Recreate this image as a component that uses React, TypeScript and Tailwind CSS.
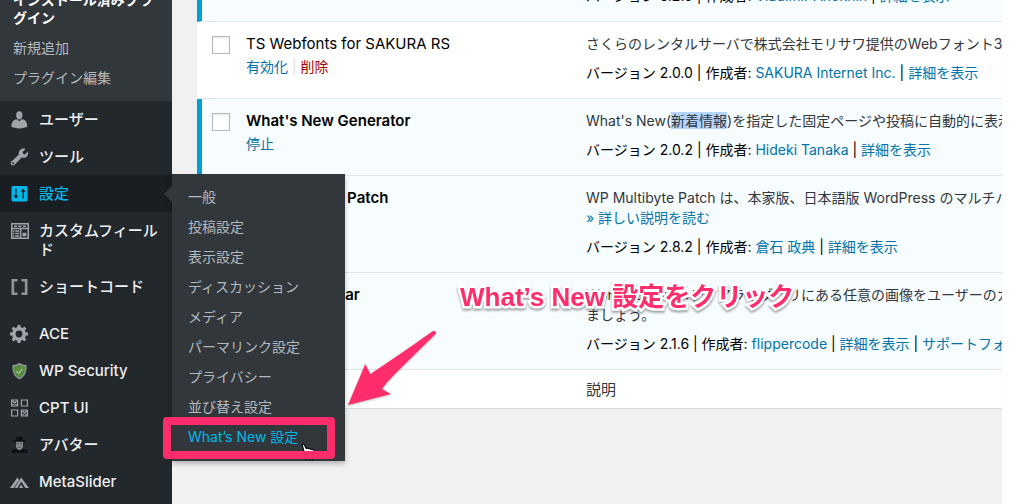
import type { ReactNode } from "react";

type MenuItem = { text: string; icon: ReactNode; current?: boolean };

function Icon({ children }: { children: ReactNode }) {
  return (
    <svg viewBox="0 0 20 20" className="w-5 h-5 shrink-0" fill="#a0a5aa" aria-hidden="true">
      {children}
    </svg>
  );
}

const icons = {
  user: (
    <Icon>
      <ellipse cx="10.3" cy="5.3" rx="3.1" ry="4.1" />
      <path d="M6.2 9.4 8.4 9.2 10.3 11.6 12.3 9.2 14.6 9.4C17 10.2 18.3 12.6 18.3 16.6 15.8 19 4.8 19 2.3 16.6 2.3 12.6 3.8 10.2 6.2 9.4Z" />
    </Icon>
  ),
  tool: (
    <Icon>
      <path
        fillRule="evenodd"
        d="M16.5 2.1 13.6 5.1 14.2 7 16 7.5 18.9 4.6C19.6 6.7 18.9 8.6 17.6 9.7 16.2 10.9 14.3 11.1 12.7 10.6L5.6 17.7C3.4 19.8.2 16.8 2.4 14.5L9.9 7.6C9.4 5.8 9.8 4.1 11.1 2.9 12.5 1.6 14.6 1.2 16.5 2.1ZM4.1 15.2A1 1 0 1 0 4.1 17.2 1 1 0 1 0 4.1 15.2Z"
      />
    </Icon>
  ),
  settings: (
    <Icon>
      <rect x="2.5" y="2" width="16" height="15.5" rx="1.5" fill="#00b9eb" />
      <path d="M4.4 11.4H9.4L6.9 14.8ZM11.6 7.8H16.6L14.1 4.4Z" fill="#191e23" />
      <path d="M6.9 4.6V12M14.1 7V14.8" stroke="#191e23" strokeWidth="1.3" />
    </Icon>
  ),
  fields: (
    <Icon>
      <path
        fillRule="evenodd"
        d="M2 2H20V18H2ZM3.5 3.5V6.8H18.5V3.5ZM3.5 8.3V16.5H11V8.3ZM12.4 8.3V16.5H18.5V8.3Z"
      />
      <path d="M5 4.4H8V5.9H5ZM9.3 4.4H12.6V5.9H9.3ZM14 4.4H17V5.9H14ZM4 9.3H5.4V10.7H4ZM6.2 9.3H10.3V10.7H6.2ZM4 11.8H5.4V13.2H4ZM6.2 11.8H10.3V13.2H6.2ZM4 14.3H5.4V15.7H4ZM6.2 14.3H10.3V15.7H6.2ZM13.5 11.8H17.4V15.3H13.5Z" />
    </Icon>
  ),
  code: (
    <Icon>
      <path d="M2.5 2H8.5V4.4H5.2V15.6H8.5V18H2.5ZM18.5 2H12.5V4.4H15.8V15.6H12.5V18H18.5Z" fill="#8f9499" />
    </Icon>
  ),
  gear: (
    <Icon>
      <circle cx="10" cy="10" r="5.2" fill="none" stroke="#a0a5aa" strokeWidth="3.6" />
      <path
        d="M10 1V4M10 16V19M1 10H4M16 10H19M3.6 3.6 5.8 5.8M14.2 14.2 16.4 16.4M16.4 3.6 14.2 5.8M5.8 14.2 3.6 16.4"
        stroke="#a0a5aa"
        strokeWidth="3"
      />
    </Icon>
  ),
  shield: (
    <Icon>
      <path d="M10.5 1.8C12.8 3.6 15 4 17.6 4 17.8 10 16.8 15.6 10.5 18.4 4.2 15.6 3.2 10 3.4 4 6 4 8.2 3.6 10.5 1.8Z" fill="#8c9297" />
      <path d="M10.5 3.5C12.4 4.9 14.2 5.4 16.2 5.4 16.2 10.5 15.2 14.6 10.5 16.9 5.8 14.6 4.8 10.5 4.8 5.4 6.8 5.4 8.6 4.9 10.5 3.5Z" fill="#598c3f" />
      <path d="M7.4 10.2 9.8 12.2 13.4 7.8" fill="none" stroke="#a9bf9c" strokeWidth="1.3" />
    </Icon>
  ),
  grid: (
    <Icon>
      <path
        d="M2.6 2H8.6V8H2.6ZM12.4 2H18.4V8H12.4ZM2.6 12H8.6V18H2.6ZM12.4 12H18.4V18H12.4ZM3.6 3 7.6 7M7.6 3 3.6 7M13.4 13 17.4 17M17.4 13 13.4 17"
        fill="none"
        stroke="#a0a5aa"
        strokeWidth="1.2"
      />
    </Icon>
  ),
  avatar: (
    <Icon>
      <path d="M7.4 2.4Q10.5.8 13.6 2.4V6H7.4ZM4 5.2H17V6.8H4ZM2.5 18Q2.5 14.2 6.5 14H14.5Q18.5 14.2 18.5 18Z" fill="#0d0f11" />
      <path d="M7 6.8H14V11.5Q13.4 14.8 10.5 15.2 7.6 14.8 7 11.5Z" fill="#858585" />
      <path d="M7.6 8.2H9.8V9.2H7.6ZM11.2 8.2H13.4V9.2H11.2ZM9 12H12V12.8H9Z" fill="#555" />
    </Icon>
  ),
  slider: (
    <Icon>
      <path d="M1 16 8.4 5.4 10.2 8 4.6 16ZM5.6 16 12.2 5.4 20 16H16.4L12.2 9.8 8.4 16ZM10 16 12 12.6 14.4 16Z" />
    </Icon>
  ),
};

const mainMenu: MenuItem[] = [
  { text: "ユーザー", icon: icons.user },
  { text: "ツール", icon: icons.tool },
  { text: "設定", icon: icons.settings, current: true },
  { text: "カスタムフィールド", icon: icons.fields },
  { text: "ショートコード", icon: icons.code },
];

const pluginMenu: MenuItem[] = [
  { text: "ACE", icon: icons.gear },
  { text: "WP Security", icon: icons.shield },
  { text: "CPT UI", icon: icons.grid },
  { text: "アバター", icon: icons.avatar },
  { text: "MetaSlider", icon: icons.slider },
];

const settingsMenu = [
  "一般",
  "投稿設定",
  "表示設定",
  "ディスカッション",
  "メディア",
  "パーマリンク設定",
  "プライバシー",
  "並び替え設定",
];

function HandCursor() {
  return (
    <svg viewBox="0 0 16 18" className="absolute left-[128px] top-[21px] w-4 h-[18px]" aria-hidden="true">
      <path
        d="M2.2 1.6Q3.6.4 4.6 2.2L6.2 5.6Q7.4 4.4 8.4 5.8 9.8 5 10.8 6.4 12 5.6 13 6.8 14.6 6.8 14.6 8.6V12L13 16.8H6.4L2 12Q1.4 10 3.4 10.4L4.6 11Z"
        fill="#fff"
        stroke="#000"
        strokeWidth="1.1"
        strokeLinejoin="round"
      />
    </svg>
  );
}

function SettingsFlyout() {
  return (
    <div className="absolute left-full -top-px z-20 w-[173px] pt-2 pb-[9px] bg-[#32373c] text-sm leading-[30px] shadow-[0_3px_5px_rgba(0,0,0,0.25)]">
      {/* Pointer toward the open item */}
      <span className="absolute right-full top-3 border-y-8 border-r-8 border-y-transparent border-r-[#32373c]" />
      <ul>
        {settingsMenu.map((text) => (
          <li key={text}>
            <a href="#" className="block px-4 text-[#b4b9be]">{text}</a>
          </li>
        ))}
        <li className="relative">
          <a href="#" className="block px-4 text-[#00b9eb]">What’s New 設定</a>
          <HandCursor />
          <span className="absolute -left-[9px] right-[10px] -top-[5px] -bottom-[7px] border-8 border-[#ff2d6b] rounded" />
        </li>
      </ul>
    </div>
  );
}

function Menu({ items }: { items: MenuItem[] }) {
  return (
    <ul>
      {items.map((item) => (
        <li key={item.text} className={item.current ? "relative bg-[#191e23]" : ""}>
          <a
            href="#"
            className={`flex gap-2.5 pl-[9px] pr-3 py-[9px] text-[15px] leading-[19px] font-medium ${item.current ? "text-[#00b9eb]" : "text-[#eee]"}`}
          >
            <span className="h-[19px]">{item.icon}</span>
            <span>{item.text}</span>
          </a>
          {item.current && <SettingsFlyout />}
        </li>
      ))}
    </ul>
  );
}

function Link({ children }: { children: ReactNode }) {
  return <a href="#" className="text-[#0073aa]">{children}</a>;
}

type Plugin = {
  name: string;
  active?: boolean;
  description: ReactNode;
  version: string;
  author: string;
  support?: boolean;
};

const plugins: Plugin[] = [
  {
    name: "Shortcodes Ultimate",
    active: true,
    description: "ショートコード集",
    version: "5.2.0",
    author: "Vladimir Anokhin",
  },
  {
    name: "TS Webfonts for SAKURA RS",
    description: "さくらのレンタルサーバで株式会社モリサワ提供のWebフォント30書体",
    version: "2.0.0",
    author: "SAKURA Internet Inc.",
  },
  {
    name: "What's New Generator",
    active: true,
    description: (
      <>
        What's New(<mark className="bg-[#b2d4fd] text-inherit">新着情報</mark>)を指定した固定ページや投稿に自動的に表示
      </>
    ),
    version: "2.0.2",
    author: "Hideki Tanaka",
  },
  {
    name: "WP Multibyte Patch",
    active: true,
    description: (
      <>
        WP Multibyte Patch は、本家版、日本語版 WordPress のマルチバイト
        <br />
        <Link>» 詳しい説明を読む</Link>
      </>
    ),
    version: "2.8.2",
    author: "倉石 政典",
  },
  {
    name: "WP User Avatar",
    active: true,
    description: (
      <>
        WordPress のメディアライブラリにある任意の画像をユーザーのカスタム
        <br />
        ましょう。
      </>
    ),
    version: "2.1.6",
    author: "flippercode",
    support: true,
  },
];

function PluginRow({ plugin }: { plugin: Plugin }) {
  return (
    <tr className={`align-top *:border-b *:border-b-[#e1e5e8] ${plugin.active ? "bg-[#f7fcfe]" : "bg-white"}`}>
      <td className={`border-l-[5px] pl-2.5 pt-3.5 ${plugin.active ? "border-l-[#00a0d2]" : "border-l-white"}`}>
        <input
          type="checkbox"
          aria-label={plugin.name}
          className="block appearance-none w-[18px] h-[18px] bg-white border border-[#b4b9be] shadow-[inset_0_1px_2px_rgba(0,0,0,0.1)]"
        />
      </td>
      <td className="pt-3">
        <p className={`text-[15px] leading-5 text-black ${plugin.active ? "font-semibold" : ""}`}>{plugin.name}</p>
        <p className="pt-[3px] text-sm leading-5 text-[#ddd]">
          {plugin.active ? (
            <Link>停止</Link>
          ) : (
            <>
              <Link>有効化</Link> | <a href="#" className="text-[#a00]">削除</a>
            </>
          )}
        </p>
      </td>
      <td className="pt-3 pb-[15px] text-sm leading-5 whitespace-nowrap overflow-hidden">
        <p className="text-[#32373c]">{plugin.description}</p>
        <p className="mt-[9px] text-black">
          バージョン {plugin.version} | 作成者: <Link>{plugin.author}</Link> | <Link>詳細を表示</Link>
          {plugin.support && (
            <>
              {" "}| <Link>サポートフォーラム</Link>
            </>
          )}
        </p>
      </td>
    </tr>
  );
}

export default function App() {
  return (
    <div className="relative flex h-screen overflow-hidden bg-white font-[Inter,'Noto_Sans_CJK_JP',sans-serif]">
      {/* --- SIDEBAR --- */}
      <nav className="relative z-10 w-[172px] shrink-0 bg-[#23282d]">
        <ul className="-mt-[9px] pb-2 bg-[#32373c] text-sm text-[#b4b9be]">
          <li className="pl-[13px] pr-3 pb-1.5 leading-[18px] font-semibold text-white">
            <a href="#">インストール済みプラグイン</a>
          </li>
          <li className="pl-[13px] leading-[30px]"><a href="#">新規追加</a></li>
          <li className="pl-[13px] leading-[30px]"><a href="#">プラグイン編集</a></li>
        </ul>
        <Menu items={mainMenu} />
        <div className="h-2.5" />
        <Menu items={pluginMenu} />
      </nav>

      {/* --- PLUGIN LIST --- */}
      <main className="flex-1 min-w-0 mr-[22px] pl-[25px] bg-[#f1f1f1]">
        <table className="-mt-[55px] w-full table-fixed border-separate border-spacing-0 bg-white shadow-[0_1px_1px_rgba(0,0,0,0.08)]">
          <colgroup>
            <col className="w-[49px]" />
            <col className="w-[340px]" />
            <col />
          </colgroup>
          <tbody>
            {plugins.map((plugin) => (
              <PluginRow key={plugin.name} plugin={plugin} />
            ))}
          </tbody>
          <tfoot>
            <tr className="text-[15px] leading-5 text-left text-[#32373c]">
              <td />
              <td />
              <th scope="col" className="pt-2.5 pb-2 font-normal">説明</th>
            </tr>
          </tfoot>
        </table>
      </main>

      {/* --- CALLOUT --- */}
      <p className="absolute z-30 left-[460px] top-[280px] text-[26px] leading-[34px] font-bold whitespace-nowrap text-[#ff2d6b] font-['Liberation_Sans','Noto_Sans_CJK_JP',sans-serif] [-webkit-text-stroke:5px_white] [paint-order:stroke_fill] drop-shadow-[0_2px_1px_rgba(0,0,0,0.35)]">
        What’s New 設定をクリック
      </p>
      <svg
        viewBox="0 0 92 78"
        className="absolute z-30 left-[346px] top-[329px] w-[92px] h-[78px] drop-shadow-[0_1px_1px_rgba(0,0,0,0.25)]"
        aria-hidden="true"
      >
        <path d="M2 76 19.3 35 24.3 45Q52 27 86.5 2.3 90.5 1.2 89.8 4.8 60 34 47 47 40 54 36 60L45 65Z" fill="#ff2d6b" />
      </svg>
    </div>
  );
}
